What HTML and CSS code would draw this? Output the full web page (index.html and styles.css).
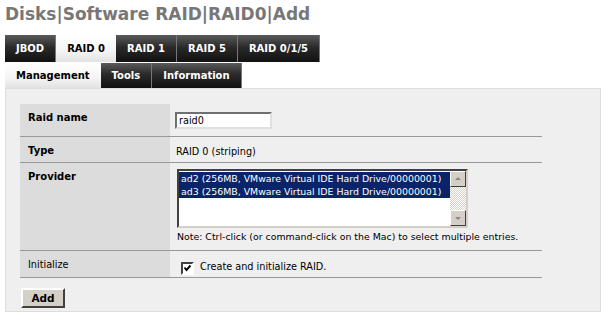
FILE: index.html
```html
<!DOCTYPE html>
<html lang="en">
<head>
  <meta charset="UTF-8">
  <title>Disks | Software RAID | RAID0 | Add</title>
  <link rel="stylesheet" href="styles.css">
</head>
<body>
  <h1 class="pagetitle">Disks|Software RAID|RAID0|Add</h1>

  <ul class="tabs">
    <li class="tab"><a href="#">JBOD</a></li>
    <li class="tab active"><a href="#">RAID 0</a></li>
    <li class="tab"><a href="#">RAID 1</a></li>
    <li class="tab"><a href="#">RAID 5</a></li>
    <li class="tab"><a href="#">RAID 0/1/5</a></li>
  </ul>
  <ul class="tabs subtabs">
    <li class="tab active"><a href="#">Management</a></li>
    <li class="tab"><a href="#">Tools</a></li>
    <li class="tab"><a href="#">Information</a></li>
  </ul>

  <div class="tabcont">
    <table class="formtable">
      <tr class="row-name">
        <td class="vncellreq">Raid name</td>
        <td class="vtable"><input type="text" class="formfld" value="raid0"></td>
      </tr>
      <tr class="row-type">
        <td class="vncellreq">Type</td>
        <td class="vtable">RAID 0 (striping)</td>
      </tr>
      <tr class="row-provider">
        <td class="vncellreq">Provider</td>
        <td class="vtable">
          <div class="listbox">
            <div class="options">
              <div class="opt sel">ad2 (256MB, VMware Virtual IDE Hard Drive/00000001)</div>
              <div class="opt sel">ad3 (256MB, VMware Virtual IDE Hard Drive/00000001)</div>
            </div>
            <div class="scrollbar">
              <span class="arrow up"></span>
              <span class="track"></span>
              <span class="arrow down"></span>
            </div>
          </div>
          <div class="note">Note: Ctrl-click (or command-click on the Mac) to select multiple entries.</div>
        </td>
      </tr>
      <tr class="row-init">
        <td class="vncell">Initialize</td>
        <td class="vtable check">
          <span class="checkbox">
            <svg width="9" height="9" viewBox="0 0 9 9"><path d="M1.5 3.5 L3.5 6 L7.5 1.5" fill="none" stroke="#000" stroke-width="2"/></svg>
          </span>Create and initialize RAID.
        </td>
      </tr>
    </table>
    <button class="formbtn">Add</button>
  </div>
</body>
</html>
```

FILE: styles.css
```css
body {
  margin: 0;
  padding: 4px 5px;
  background-color: #fff;
  font-family: "DejaVu Sans", Verdana, sans-serif;
  font-size: 9.7px;
  color: #000;
}

.pagetitle {
  margin: 0 0 10px 0;
  font-size: 17px;
  font-weight: bold;
  color: #777;
  height: 21px;
  line-height: 21px;
}

.tabs {
  list-style: none;
  margin: 0;
  padding: 0;
  display: flex;
  height: 27px;
}
.subtabs {
  margin-top: 1px;
  height: 25px;
}
.tab {
  height: 100%;
}
.tab a {
  display: flex;
  align-items: center;
  height: 100%;
  padding: 0 11px;
  color: #fff;
  font-size: 10px;
  font-weight: bold;
  text-decoration: none;
  background: linear-gradient(#5a5a5a, #2a2a2a 45%, #111);
  border-right: 1px solid #777;
  box-sizing: border-box;
}
.tab.active a {
  color: #000;
  background: linear-gradient(#fff, #f4f4f4 60%, #e2e2e2);
  border-right: none;
}

.tabcont {
  background-color: #efefef;
  border: 1px solid #ddd;
  width: 596px;
  height: 224px;
  box-sizing: border-box;
  padding: 15px 14px 0 14px;
}

.formtable {
  border-collapse: collapse;
  width: 522px;
}
.formtable td {
  border-bottom: 1px solid #999;
  vertical-align: top;
  line-height: 13px;
}
.vncellreq, .vncell {
  width: 150px;
  background-color: #dcdcdc;
  padding: 7px 8px 0 8px;
  box-sizing: border-box;
  font-size: 10px;
  font-weight: bold;
}
.vncell {
  font-weight: normal;
  font-size: 9.7px;
}
.vtable {
  padding: 7px 6px 0 6px;
}

.row-name td { height: 25px; }
.row-name .vtable { padding-top: 8px; height: 24px; }
.row-type td { height: 18px; }
.row-type .vtable { padding-top: 8px; height: 17px; }
.row-provider td { height: 80px; }
.row-provider .vtable { padding-top: 6px; height: 81px; }
.row-init td { height: 19px; }
.row-init .vtable { padding: 9px 6px 0 11px; height: 17px; }

.formfld {
  display: block;
  width: 97px;
  height: 17px;
  box-sizing: border-box;
  border: 2px solid;
  border-color: #707070 #e0e0e0 #e0e0e0 #707070;
  padding: 0 2px;
  margin-left: -1px;
  font-family: "DejaVu Sans", Verdana, sans-serif;
  font-size: 9.7px;
  background: #fff;
}

.listbox {
  display: flex;
  width: 291px;
  height: 59px;
  margin-left: 1px;
  box-sizing: border-box;
  border: 2px solid;
  border-color: #404040 #d4d0c8 #d4d0c8 #404040;
  background: #fff;
}
.options {
  flex: 1;
  padding-top: 1px;
  overflow: hidden;
}
.opt {
  height: 13px;
  line-height: 13px;
  padding-left: 2px;
  font-size: 9.4px;
  white-space: nowrap;
}
.opt.sel {
  background-color: #0a246a;
  color: #fff;
}
.scrollbar {
  width: 16px;
  display: flex;
  flex-direction: column;
}
.track {
  flex: 1;
  background: repeating-conic-gradient(#fff 0 25%, #d4d0c8 0 50%) 0 0 / 2px 2px;
}
.arrow {
  height: 16px;
  box-sizing: border-box;
  background: #d4d0c8;
  border: 1px solid;
  border-color: #fff #404040 #404040 #fff;
  position: relative;
}
.arrow::after {
  content: "";
  position: absolute;
  left: 4px;
  border-left: 3px solid transparent;
  border-right: 3px solid transparent;
}
.arrow.up::after {
  top: 5px;
  border-bottom: 3px solid #888;
}
.arrow.down::after {
  top: 6px;
  border-top: 3px solid #888;
}

.note {
  margin-top: 2px;
  margin-left: 1px;
  font-size: 9.4px;
  white-space: nowrap;
}

.checkbox {
  display: inline-flex;
  align-items: center;
  justify-content: center;
  width: 13px;
  height: 13px;
  box-sizing: border-box;
  border: 2px solid;
  border-color: #404040 #fff #fff #404040;
  background: #fff;
  vertical-align: -3px;
  margin-right: 6px;
}

.formbtn {
  display: block;
  margin: 10px 0 0 1px;
  width: 44px;
  height: 20px;
  font-family: "DejaVu Sans", Verdana, sans-serif;
  font-size: 10.5px;
  font-weight: bold;
  background: #d4d0c8;
  border: 2px solid;
  border-color: #fff #404040 #404040 #fff;
  padding: 0;
  color: #000;
}
```
